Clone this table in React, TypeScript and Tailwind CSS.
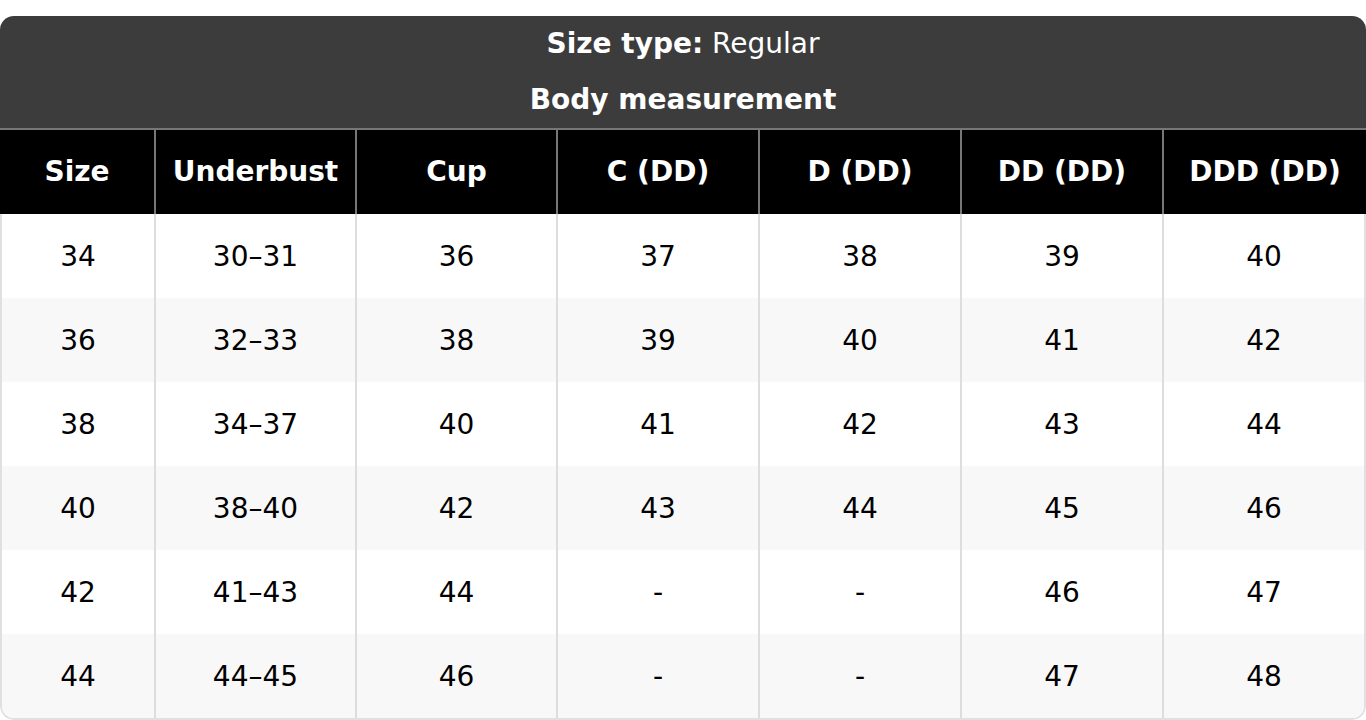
const columns = ['Size', 'Underbust', 'Cup', 'C (DD)', 'D (DD)', 'DD (DD)', 'DDD (DD)'];

const rows = [
  ['34', '30–31', '36', '37', '38', '39', '40'],
  ['36', '32–33', '38', '39', '40', '41', '42'],
  ['38', '34–37', '40', '41', '42', '43', '44'],
  ['40', '38–40', '42', '43', '44', '45', '46'],
  ['42', '41–43', '44', '-', '-', '46', '47'],
  ['44', '44–45', '46', '-', '-', '47', '48'],
];

export default function App() {
  return (
    <div className="bg-white pt-4 font-['DejaVu_Sans',sans-serif] text-[28px]">
      <div className="overflow-hidden rounded-[14px]">
        {/* Title */}
        <div className="bg-[#3c3c3c] text-center text-white">
          <div className="leading-[56px]">
            <span className="font-bold">Size type:</span> Regular
          </div>
          <div className="font-bold leading-[56px]">Body measurement</div>
        </div>

        {/* Column headings */}
        <div className="grid grid-cols-[154px_201px_201px_202px_202px_202px_1fr] border-t-2 border-[#777777] bg-black">
          {columns.map((col, i) => (
            <div
              key={col}
              className={`flex h-[84px] items-center justify-center font-bold text-white ${
                i > 0 ? 'border-l-2 border-[#777777]' : ''
              }`}
            >
              {col}
            </div>
          ))}
        </div>

        {/* Body */}
        <div className="overflow-hidden rounded-b-[14px] border-x-2 border-b-2 border-[#e0e0e0]">
          {rows.map((row, r) => (
            <div
              key={r}
              className={`grid grid-cols-[152px_201px_201px_202px_202px_202px_1fr] ${
                r % 2 === 1 ? 'bg-[#f8f8f8]' : 'bg-white'
              }`}
            >
              {row.map((cell, i) => (
                <div
                  key={i}
                  className={`flex h-[84px] items-center justify-center pt-[2px] text-black ${
                    i > 0 ? 'border-l-2 border-[#dddddd]' : ''
                  }`}
                >
                  {cell}
                </div>
              ))}
            </div>
          ))}
        </div>
      </div>
    </div>
  );
}
